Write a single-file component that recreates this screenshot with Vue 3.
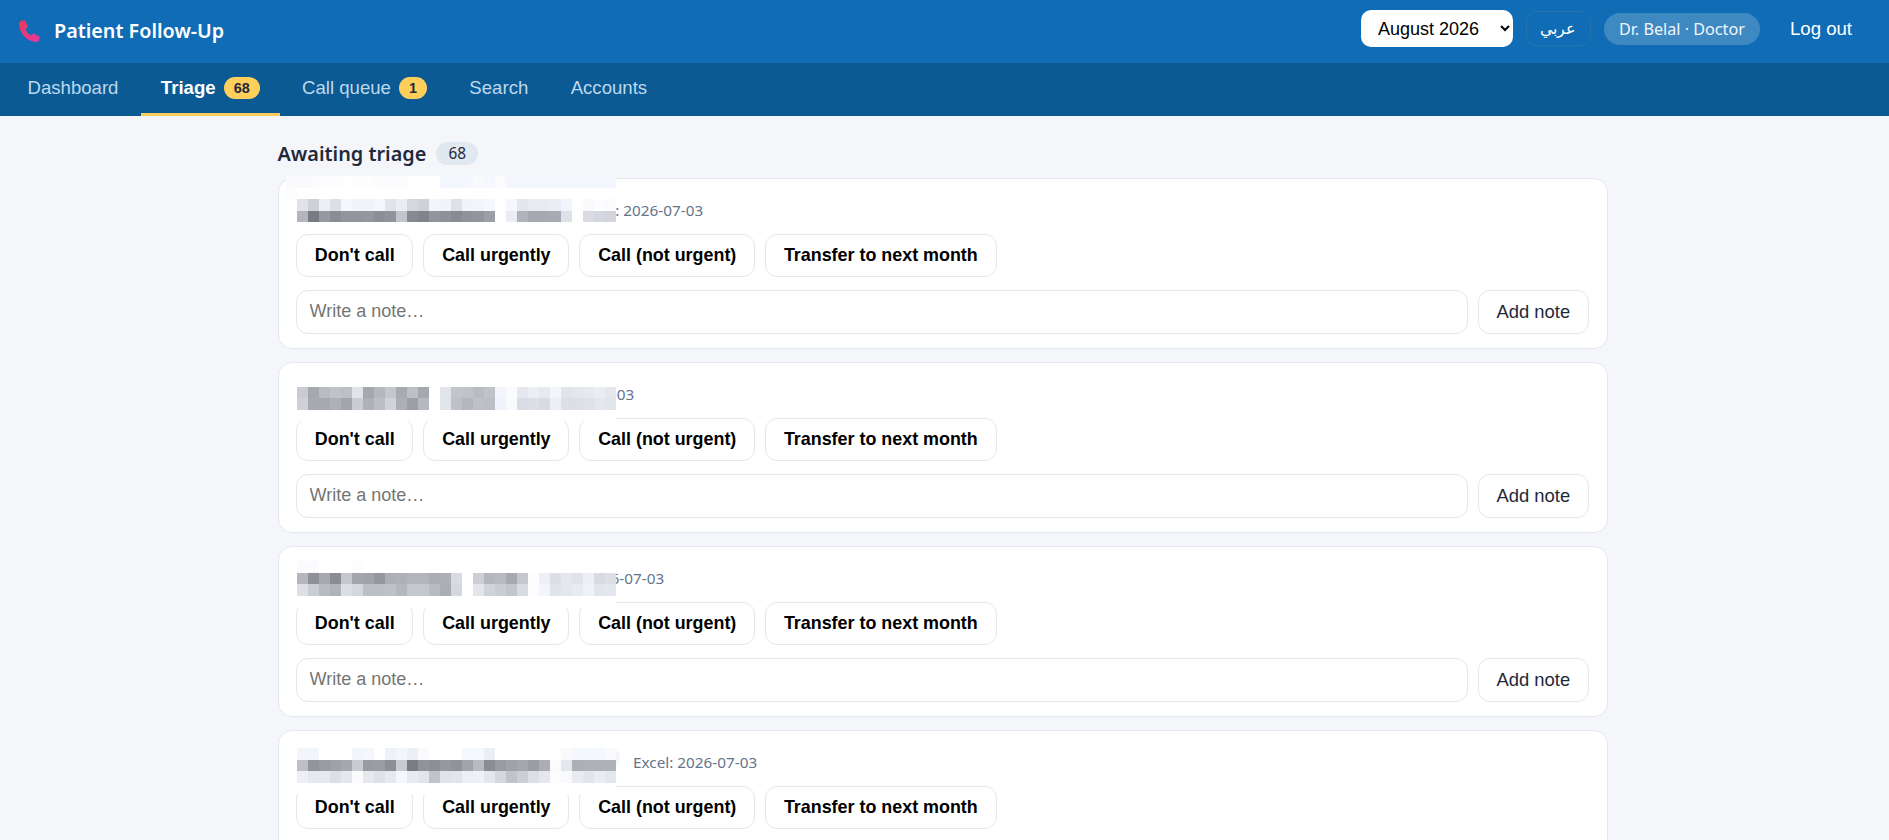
<script setup>
const tabs = [
  { label: 'Dashboard' },
  { label: 'Triage', badge: 68, active: true },
  { label: 'Call queue', badge: 1 },
  { label: 'Search' },
  { label: 'Accounts' }
]
const actions = ["Don't call", 'Call urgently', 'Call (not urgent)', 'Transfer to next month']
const W = 'ff'
const parse = (s) => s.split(',')
const withLead = (s, lead = W) => [lead, ...parse(s)]
const blank = Array(30).fill(W)
const cards = [
  {
    nameWidth: 273, top: -2.7,
    rows: [
      parse('fa,fa,fb,fd,fd,fe,fd,fe,fc,fb,fc,fe,fe,fe,f7,f7,f8,fa,f9,fb,f7,f7,f7,f7,f7,f7,f7,f7,f7,f7'),
      parse('fd,ff,ff,ff,ff,ff,ff,ff,ff,ff,ff,ff,ff,ff,ff,ff,ff,ff,ff,ff,ff,ff,ff,ff,ff,ff,ff,ff,ff,ff'),
      withLead('e4,d2,f0,e0,f8,f4,f4,f8,e5,ee,d8,d2,f6,f4,e2,f5,f6,f9,fe,f8,e8,ec,ec,ee,f5,ff,fa,fd,fb'),
      withLead('b6,7c,9a,8e,96,96,98,90,94,c6,8a,84,96,92,8c,94,96,a0,fe,ee,b4,aa,aa,ac,e2,ff,dc,d8,d6')
    ]
  },
  {
    nameWidth: 204, top: 12.8,
    rows: [
      blank,
      withLead('cc,a9,bd,c4,c0,e4,a8,b9,c8,ab,c0,a8,ff,e6,c6,c4,bc,c4,f6,fb,e9,ef,ea,f6,e5,e7,ea,ee,e8'),
      withLead('d2,aa,aa,b2,a6,ce,b2,bf,d4,b0,a0,ba,ff,e6,c2,b8,c2,c0,f4,fa,de,e0,dc,f0,e0,e0,e2,e8,e6'),
      blank
    ]
  },
  {
    nameWidth: 234, top: 14.8,
    rows: [
      withLead('fb,fb,ff,ff,ff,fc,ff,ff,ff,ff,ff,ff,ff,ff,ff,ff,ff,ff,ff,ff,ff,ff,ff,ff,ff,ff,ff,ff,ff'),
      withLead('b8,92,aa,8e,c8,a6,a4,98,b0,b2,b6,b6,ae,b0,dc,ff,d0,b8,bc,aa,c8,fd,f0,e0,e8,e4,f0,dc,e0'),
      withLead('e0,ce,bc,b4,e0,d8,c0,c0,c2,b8,c8,c8,bc,ae,d8,ff,e6,d4,ce,c6,dc,fd,f6,e4,e8,ec,f3,e6,e8'),
      blank
    ]
  },
  {
    nameWidth: 327, top: 6.3, chip: true,
    rows: [
      blank,
      withLead('f6,f6,ff,ff,ff,f6,f8,ff,f2,f6,f0,fb,ff,ff,ff,f9,f9,ef,ff,ff,ff,ff,ff,ff,fa,f8,f8,f8,fa'),
      withLead('c0,96,9c,a2,a8,cc,9c,9e,90,cc,7e,94,90,9a,94,a4,bc,8e,9c,a4,a8,9e,ae,fb,e8,b0,b2,b2,b2'),
      withLead('f0,ea,ea,e0,e8,fb,ea,e2,ea,f8,ec,e6,c4,e4,e6,f0,f2,e8,d8,c4,d0,e0,e8,fd,fa,ec,e6,ee,e8'),
      blank
    ]
  }
]
const cellColor = (hex) => {
  const g = parseInt(hex, 16)
  const tint = g < 250 ? 4 : 0
  return `rgb(${g - tint}, ${g}, ${Math.min(255, g + tint + 2)})`
}
</script>

<template>
  <div class="page">
    <header class="topbar">
      <div class="brand">
        <svg class="logo" viewBox="0 0 24 24" aria-hidden="true">
          <defs>
            <linearGradient id="phoneGrad" x1="0.1" y1="0" x2="0.9" y2="1">
              <stop offset="0" stop-color="#e8385c" />
              <stop offset="1" stop-color="#e83a9c" />
            </linearGradient>
          </defs>
          <path fill="url(#phoneGrad)" d="M5 2.5 L8.5 2 L11 8 L8.8 10.4 C10 13.5 11.5 15 14 16 L16.3 14 L22 17.5 L21 21 C20.5 22 19 22.5 17 22 C9 20.5 3.5 14 2.8 6 C2.7 4.5 3.5 3 5 2.5 Z" />
        </svg>
        <span class="title">Patient Follow-Up</span>
      </div>
      <div class="top-actions">
        <select class="month">
          <option>August 2026</option>
        </select>
        <button class="lang">عربي</button>
        <span class="user">Dr. Belal · Doctor</span>
        <button class="logout">Log out</button>
      </div>
    </header>

    <nav class="tabs">
      <button v-for="t in tabs" :key="t.label" class="tab" :class="{ active: t.active }">
        {{ t.label }}
        <span v-if="t.badge" class="tab-badge">{{ t.badge }}</span>
      </button>
    </nav>

    <main class="main">
      <div class="heading">
        <h2>Awaiting triage</h2>
        <span class="count">68</span>
      </div>
      <article v-for="(c, i) in cards" :key="i" class="card">
        <div class="head">
          <span class="name" :style="{ width: c.nameWidth + 'px' }">
            <span v-if="c.chip" class="chip"></span>
          </span>
          <span class="date">Excel: 2026-07-03</span>
        </div>
        <div class="actions">
          <button v-for="a in actions" :key="a" class="act">{{ a }}</button>
        </div>
        <div class="note">
          <input class="note-input" placeholder="Write a note…" />
          <button class="add">Add note</button>
        </div>
        <div class="mosaic" :style="{ top: c.top + 'px' }">
          <template v-for="(row, r) in c.rows" :key="r">
            <i v-for="(cell, k) in row" :key="k" :style="{ background: cellColor(cell) }"></i>
          </template>
        </div>
      </article>
    </main>
  </div>
</template>

<style scoped>
.page {
  height: 840px;
  overflow: hidden;
  background: #f4f6fa;
  font-family: "Noto Sans", sans-serif;
  color: #1e293b;
}
button, select, input {
  font-family: "Liberation Sans", Arial, sans-serif;
}
.topbar {
  height: 63px;
  box-sizing: border-box;
  background: #0f6cb5;
  display: flex;
  align-items: center;
  justify-content: space-between;
  padding: 0 19px 2px 16px;
}
.brand {
  display: flex;
  align-items: center;
  gap: 12px;
}
.logo {
  width: 26px;
  height: 26px;
}
.title {
  font-size: 19.75px;
  font-weight: 600;
  color: #fff;
}
.top-actions {
  display: flex;
  align-items: center;
  gap: 13px;
  margin-bottom: 4px;
}
.month {
  height: 37px;
  width: 152px;
  border: none;
  border-radius: 10px;
  background: #fff;
  color: #000;
  font-size: 18px;
  padding: 0 13px;
}
.lang {
  height: 35px;
  width: 65px;
  background: transparent;
  border: 1px solid #2574ae;
  border-radius: 10px;
  color: #fff;
  font-size: 16px;
}
.user {
  height: 32px;
  margin-top: 1px;
  display: flex;
  align-items: center;
  padding: 0 15px;
  border-radius: 16px;
  background: rgba(255, 255, 255, 0.2);
  color: #f1f5f9;
  font-size: 16.2px;
}
.logout {
  background: transparent;
  border: none;
  color: #fff;
  font-size: 18.6px;
  padding: 6px 18px 6px 17px;
}
.tabs {
  height: 53px;
  background: #0b5a94;
  display: flex;
  gap: 2.4px;
  padding-left: 7.5px;
}
.tab {
  background: transparent;
  border: none;
  border-bottom: 3px solid transparent;
  color: #bcd9ee;
  font-size: 18.6px;
  padding: 0 20px 1px;
  display: flex;
  align-items: center;
  gap: 8px;
}
.tab.active {
  color: #fff;
  font-weight: 700;
  border-bottom-color: #ffcb5c;
}
.tab-badge {
  background: #ffcf5c;
  color: #1e293b;
  font-weight: 700;
  font-size: 14.4px;
  border-radius: 11px;
  height: 22px;
  min-width: 27.7px;
  margin-top: 1px;
  padding: 0 10px;
  box-sizing: border-box;
  display: flex;
  align-items: center;
  justify-content: center;
}
.main {
  margin-left: 277.5px;
  width: 1330px;
  padding-top: 25px;
}
.heading {
  height: 24px;
  margin-bottom: 12.7px;
  display: flex;
  align-items: center;
  gap: 10px;
}
.heading h2 {
  margin: 0;
  font-size: 19.85px;
  font-weight: 600;
  color: #1e293b;
}
.count {
  background: #e2e8f0;
  border-radius: 12px;
  height: 23px;
  width: 42px;
  display: flex;
  align-items: center;
  justify-content: center;
  font-size: 15.4px;
}
.card {
  position: relative;
  background: #fff;
  border: 1px solid #e2e8f0;
  border-radius: 14px;
  padding: 17px 18px 15px 17.5px;
  margin-bottom: 12.6px;
  box-sizing: border-box;
  height: 171.4px;
}
.head {
  height: 28px;
  margin-bottom: 10.1px;
  display: flex;
  align-items: center;
  gap: 10px;
}
.name {
  display: flex;
  justify-content: flex-end;
  height: 24px;
  padding-right: 3px;
  box-sizing: border-box;
}
.chip {
  width: 24px;
  height: 22px;
  margin-top: -3px;
  border-radius: 11px;
  background: #f4f5f9;
}
.date {
  font-size: 15.3px;
  color: #64748b;
}
.actions {
  display: flex;
  gap: 10px;
  margin-bottom: 13.1px;
}
.act {
  height: 43px;
  padding: 0 17.8px;
  background: #fff;
  border: 1px solid #e2e8f0;
  border-radius: 12px;
  font-size: 17.9px;
  font-weight: 700;
  color: #000;
}
.note {
  display: flex;
  gap: 10.6px;
}
.note-input {
  flex: 1;
  min-width: 0;
  height: 44px;
  box-sizing: border-box;
  padding: 0 12.6px;
  background: #fff;
  border: 1px solid #e2e8f0;
  border-radius: 12px;
  font-size: 18px;
  color: #1e293b;
}
.note-input::placeholder {
  color: #757575;
}
.add {
  width: 110.4px;
  height: 44px;
  background: #fff;
  border: 1px solid #e2e8f0;
  border-radius: 12px;
  font-size: 18.4px;
  color: #1e293b;
}
.mosaic {
  position: absolute;
  left: 7.5px;
  display: grid;
  grid-template-columns: repeat(30, 11px);
  grid-auto-rows: 11.5px;
}
.mosaic i {
  display: block;
}
</style>

<style>
html, body { margin: 0; overflow: hidden; }
</style>
